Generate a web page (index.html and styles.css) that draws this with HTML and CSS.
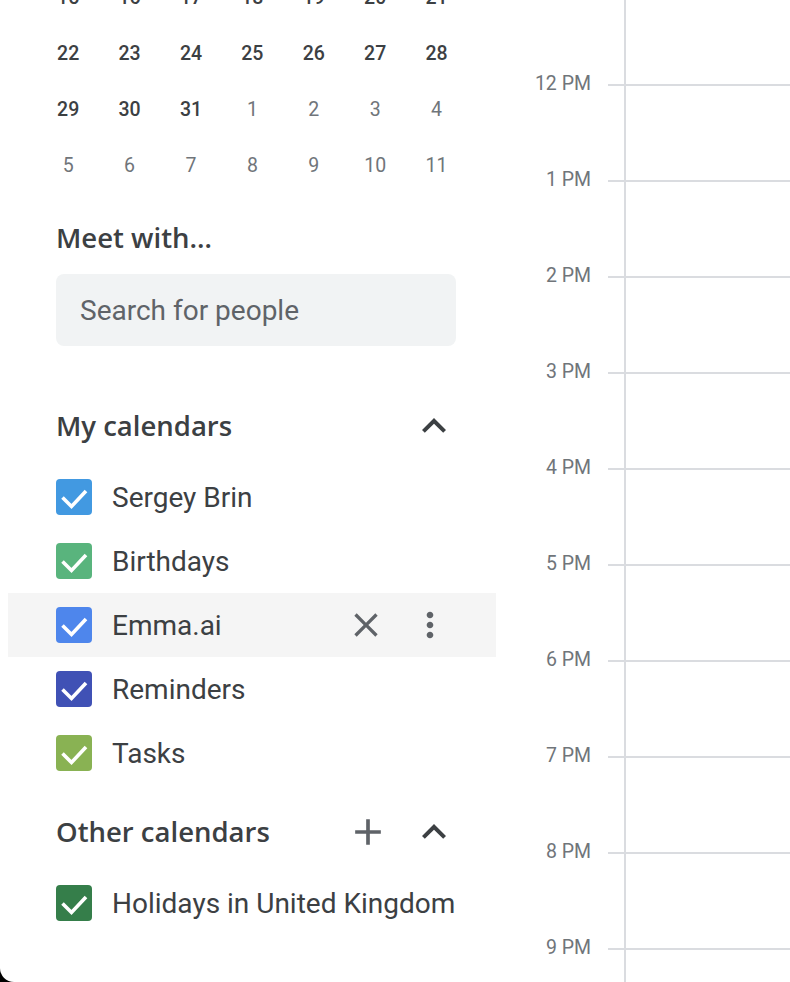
FILE: index.html
```html
<!DOCTYPE html>
<html lang="en">
<head>
<meta charset="utf-8">
<title>Calendar</title>
<link rel="stylesheet" href="styles.css">
</head>
<body>
<div class="app">
  <aside class="sidebar">
    <div class="minical">
      <span class="d">15</span><span class="d">16</span><span class="d">17</span><span class="d">18</span><span class="d">19</span><span class="d">20</span><span class="d">21</span>
      <span class="d">22</span><span class="d">23</span><span class="d">24</span><span class="d">25</span><span class="d">26</span><span class="d">27</span><span class="d">28</span>
      <span class="d">29</span><span class="d">30</span><span class="d">31</span><span class="d other">1</span><span class="d other">2</span><span class="d other">3</span><span class="d other">4</span>
      <span class="d other">5</span><span class="d other">6</span><span class="d other">7</span><span class="d other">8</span><span class="d other">9</span><span class="d other">10</span><span class="d other">11</span>
    </div>

    <h2 class="meet-title">Meet with…</h2>
    <div class="search">Search for people</div>

    <div class="section-head head-my">
      <h2 class="section-title">My calendars</h2>
      <div class="head-actions">
        <span class="icon-btn chev">
          <svg viewBox="0 0 24 24" width="48" height="48"><path d="M12 8l-6 6 1.41 1.41L12 10.83l4.59 4.58L18 14z"/></svg>
        </span>
      </div>
    </div>

    <ul class="cal-list">
      <li class="cal-item">
        <span class="cb cb-sergey"><svg viewBox="0 0 36 36" width="36" height="36"><polyline points="6.5,18.5 15.5,27.5 30,12"/></svg></span>
        <span class="cal-name">Sergey Brin</span>
      </li>
      <li class="cal-item">
        <span class="cb cb-birthdays"><svg viewBox="0 0 36 36" width="36" height="36"><polyline points="6.5,18.5 15.5,27.5 30,12"/></svg></span>
        <span class="cal-name">Birthdays</span>
      </li>
      <li class="cal-item hover">
        <span class="cb cb-emma"><svg viewBox="0 0 36 36" width="36" height="36"><polyline points="6.5,18.5 15.5,27.5 30,12"/></svg></span>
        <span class="cal-name">Emma.ai</span>
        <span class="row-actions">
          <span class="icon-btn small">
            <svg viewBox="0 0 24 24" width="40" height="40"><path d="M19 6.41L17.59 5 12 10.59 6.41 5 5 6.41 10.59 12 5 17.59 6.41 19 12 13.41 17.59 19 19 17.59 13.41 12z"/></svg>
          </span>
          <span class="icon-btn small">
            <svg viewBox="0 0 24 24" width="40" height="40"><path d="M12 8c1.1 0 2-.9 2-2s-.9-2-2-2-2 .9-2 2 .9 2 2 2zm0 2c-1.1 0-2 .9-2 2s.9 2 2 2 2-.9 2-2-.9-2-2-2zm0 6c-1.1 0-2 .9-2 2s.9 2 2 2 2-.9 2-2-.9-2-2-2z"/></svg>
          </span>
        </span>
      </li>
      <li class="cal-item">
        <span class="cb cb-reminders"><svg viewBox="0 0 36 36" width="36" height="36"><polyline points="6.5,18.5 15.5,27.5 30,12"/></svg></span>
        <span class="cal-name">Reminders</span>
      </li>
      <li class="cal-item">
        <span class="cb cb-tasks"><svg viewBox="0 0 36 36" width="36" height="36"><polyline points="6.5,18.5 15.5,27.5 30,12"/></svg></span>
        <span class="cal-name">Tasks</span>
      </li>
    </ul>

    <div class="section-head head-other">
      <h2 class="section-title">Other calendars</h2>
      <div class="head-actions">
        <span class="icon-btn plus">
          <svg viewBox="0 0 24 24" width="44" height="44"><path d="M19 13h-6v6h-2v-6H5v-2h6V5h2v6h6v2z"/></svg>
        </span>
        <span class="icon-btn chev">
          <svg viewBox="0 0 24 24" width="48" height="48"><path d="M12 8l-6 6 1.41 1.41L12 10.83l4.59 4.58L18 14z"/></svg>
        </span>
      </div>
    </div>

    <ul class="cal-list list-other">
      <li class="cal-item">
        <span class="cb cb-holidays"><svg viewBox="0 0 36 36" width="36" height="36"><polyline points="6.5,18.5 15.5,27.5 30,12"/></svg></span>
        <span class="cal-name">Holidays in United Kingdom</span>
      </li>
    </ul>
  </aside>

  <section class="day">
    <div class="labels">
      <div class="hour-label">12 PM</div>
      <div class="hour-label">1 PM</div>
      <div class="hour-label">2 PM</div>
      <div class="hour-label">3 PM</div>
      <div class="hour-label">4 PM</div>
      <div class="hour-label">5 PM</div>
      <div class="hour-label">6 PM</div>
      <div class="hour-label">7 PM</div>
      <div class="hour-label">8 PM</div>
      <div class="hour-label">9 PM</div>
    </div>
    <div class="grid">
      <div class="slot"></div>
      <div class="slot"></div>
      <div class="slot"></div>
      <div class="slot"></div>
      <div class="slot"></div>
      <div class="slot"></div>
      <div class="slot"></div>
      <div class="slot"></div>
      <div class="slot"></div>
      <div class="slot"></div>
    </div>
  </section>
</div>
</body>
</html>
```

FILE: styles.css
```css
html {
  background: #000;
}
body {
  margin: 0;
  font-family: Roboto, "Liberation Sans", Arial, sans-serif;
  color: #3c4043;
}
.app {
  width: 790px;
  height: 982px;
  background: #fff;
  display: flex;
  overflow: hidden;
  border-bottom-left-radius: 14px;
}

/* ---------- sidebar ---------- */
.sidebar {
  width: 496px;
  flex: none;
  box-sizing: border-box;
  padding: 0 38px 0 56px;
  display: flex;
  flex-direction: column;
}
.minical {
  margin: -31px 0 0 -18.5px;
  display: grid;
  grid-template-columns: repeat(7, 61.4px);
  grid-auto-rows: 56px;
}
.d {
  display: flex;
  align-items: center;
  justify-content: center;
  font-size: 19.5px;
  font-weight: 500;
  color: #3c4043;
}
.d.other {
  font-weight: 400;
  color: #70757a;
}

.meet-title,
.section-title {
  margin: 0;
  font-family: "Open Sans", Roboto, sans-serif;
  font-weight: 600;
  font-size: 27.5px;
  line-height: 40px;
  color: #3c4043;
}
.meet-title {
  margin-top: 25px;
}
.search {
  margin-top: 16px;
  width: 400px;
  height: 72px;
  box-sizing: border-box;
  border-radius: 8px;
  background: #f1f3f4;
  padding-left: 24px;
  display: flex;
  align-items: center;
  font-size: 28px;
  color: #5f6368;
}

.section-head {
  height: 48px;
  display: flex;
  align-items: center;
  justify-content: space-between;
}
.head-my {
  margin-top: 56px;
}
.head-other {
  margin-top: 23px;
}
.head-actions {
  display: flex;
  align-items: center;
  gap: 20px;
}
.icon-btn {
  display: flex;
  align-items: center;
  justify-content: center;
}
.icon-btn svg {
  display: block;
}
.chev svg {
  fill: #3c4043;
}
.plus svg,
.small svg {
  fill: #5f6368;
}

.cal-list {
  list-style: none;
  margin: 15px -38px 0 -48px;
  padding: 0;
}
.cal-item {
  height: 64px;
  display: flex;
  align-items: center;
  gap: 20px;
  padding: 0 46px 0 48px;
}
.cal-item.hover {
  background: #f5f5f5;
}
.cb {
  width: 36px;
  height: 36px;
  border-radius: 4px;
  flex: none;
}
.cb svg {
  display: block;
}
.cb polyline {
  fill: none;
  stroke: #fff;
  stroke-width: 3.6;
}
.cb-sergey { background: #4299e1; }
.cb-birthdays { background: #59b47d; }
.cb-emma { background: #4e86ec; }
.cb-reminders { background: #4051b5; }
.cb-tasks { background: #89b253; }
.cb-holidays { background: #357e4a; }

.cal-name {
  font-size: 28px;
  color: #3c4043;
  white-space: nowrap;
}
.row-actions {
  margin-left: auto;
  display: flex;
  gap: 24px;
}

/* ---------- day view ---------- */
.day {
  flex: 1;
  display: flex;
}
.labels {
  width: 112px;
  flex: none;
  box-sizing: border-box;
  padding: 72px 17px 0 0;
  text-align: right;
}
.hour-label {
  height: 96px;
  line-height: 24px;
  font-size: 19.5px;
  color: #70757a;
}
.grid {
  flex: 1;
  padding-top: 84px;
  background: linear-gradient(#dadce0, #dadce0) no-repeat 16px 0 / 2px 100%;
}
.slot {
  height: 96px;
  box-sizing: border-box;
  border-top: 2px solid #dadce0;
}
```
